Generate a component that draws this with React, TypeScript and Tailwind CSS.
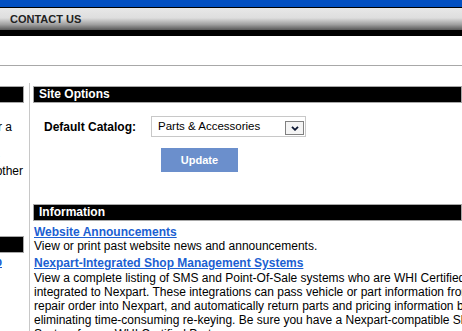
const infoText = [
  "View a complete listing of SMS and Point-Of-Sale systems who are WHI Certified and",
  "integrated to Nexpart. These integrations can pass vehicle or part information from the",
  "repair order into Nexpart, and automatically return parts and pricing information back,",
  "eliminating time-consuming re-keying. Be sure you have a Nexpart-compatible Shop Management",
  "System from a WHI Certified Partner.",
];

const SectionHeader = ({ title }: { title: string }) => (
  <div className="h-[17px] border border-[#a8a8a8] bg-black pl-[5px] text-[12px] font-bold leading-[15px] text-white">
    {title}
  </div>
);

const App = () => {
  return (
    <div className="h-[331px] w-[462px] overflow-hidden bg-white font-['Liberation_Sans',Arial,sans-serif] text-black">
      {/* top nav */}
      <div className="h-[7px] bg-[#0250c2]" />
      <div className="h-px bg-black" />
      <div className="flex h-[22px] items-center bg-[linear-gradient(to_bottom,#e8e8e8_0%,#dedede_45%,#a0a0a0_75%,#585858_100%)] pl-[10px]">
        <span className="text-[11px] font-bold leading-none text-[#222]">CONTACT US</span>
      </div>
      <div className="h-[6px] bg-black" />
      <div className="h-[29px]" />
      <div className="h-px bg-[#a8a8a8]" />

      <div className="flex">
        {/* left column, scrolled off-screen */}
        <aside className="w-[24px] shrink-0 overflow-hidden pt-[20px] text-[12px]">
          <div className="h-[17px] border border-l-0 border-[#a8a8a8] bg-black" />
          <div className="mt-[17px] leading-[14.5px]">
            <p className="flex justify-end whitespace-nowrap pr-[12px]">Choose a default catalog for a</p>
            <p className="flex justify-end whitespace-nowrap pr-[30px]">faster lookup of parts</p>
            <p className="flex justify-end whitespace-nowrap pr-[30px]">or switch to</p>
            <p className="flex justify-end whitespace-nowrap pr-[1px]">any other</p>
          </div>
          <div className="mt-[58px] h-[17px] border border-l-0 border-[#a8a8a8] bg-black" />
          <div className="mt-[2px] leading-[14px]">
            <a className="flex justify-end whitespace-nowrap pr-[22px] font-bold text-[#1c5fd2] underline">
              Catalog Help
            </a>
          </div>
        </aside>

        <div className="ml-[5px] mt-[17px] w-px shrink-0 self-stretch bg-[#c8c8c8]" />

        {/* right column */}
        <main className="ml-[3px] min-w-0 flex-1 pt-[20px] text-[12px]">
          <SectionHeader title="Site Options" />

          <div className="mt-[13px] flex items-center pl-[11px]">
            <label className="w-[107px] font-bold">Default Catalog:</label>
            <div className="flex h-[21px] w-[155px] items-center justify-between border border-[#c8c8c8] pl-[6px] pr-px">
              <span className="text-[11.5px]">Parts &amp; Accessories</span>
              <span className="mt-[3px] flex h-[14px] w-[19px] items-center justify-center border border-[#808080] bg-[#f4f4f4]">
                <svg width="8" height="5" viewBox="0 0 8 5">
                  <path d="M1 0.8 L4 3.8 L7 0.8" fill="none" stroke="#0a1430" strokeWidth="1.8" />
                </svg>
              </span>
            </div>
          </div>

          <div className="mt-[11px] pl-[128px]">
            <button className="h-[24px] w-[77px] bg-[#6b8fcc] text-[11px] font-bold text-white">Update</button>
          </div>

          <div className="mt-[32px]">
            <SectionHeader title="Information" />
          </div>

          <div className="flex flex-col gap-[3px] pl-px pt-[4px] leading-[14px]">
            <div>
              <a className="font-bold text-[#1c5fd2] underline">Website Announcements</a>
              <p className="whitespace-nowrap">View or print past website news and announcements.</p>
            </div>
            <div>
              <a className="block whitespace-nowrap pb-px font-bold text-[#1c5fd2] underline">
                Nexpart-Integrated Shop Management Systems
              </a>
              {infoText.map((line) => (
                <p key={line} className="whitespace-nowrap">
                  {line}
                </p>
              ))}
            </div>
          </div>
        </main>
      </div>
    </div>
  );
};

export default App;
